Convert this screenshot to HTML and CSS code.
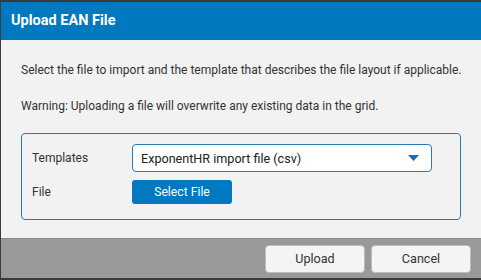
FILE: index.html
```html
<!DOCTYPE html>
<html lang="en">
<head>
  <meta charset="UTF-8">
  <title>Upload EAN File</title>
  <link rel="stylesheet" href="styles.css">
</head>
<body>
  <div class="dialog">
    <div class="dlg-head">Upload EAN File</div>
    <div class="dlg-body">
      <p>Select the file to import and the template that describes the file layout if applicable.</p>
      <p>Warning: Uploading a file will overwrite any existing data in the grid.</p>
      <div class="box">
        <div class="row">
          <span class="lbl">Templates</span>
          <div class="select">
            <span>ExponentHR import file (csv)</span>
            <svg width="11" height="6" viewBox="0 0 11 6"><path d="M0 0H11L5.5 6Z" fill="#1a6fae"/></svg>
          </div>
        </div>
        <div class="row">
          <span class="lbl">File</span>
          <span class="btn-blue">Select File</span>
        </div>
      </div>
    </div>
    <div class="dlg-foot">
      <span class="btn">Upload</span>
      <span class="btn">Cancel</span>
    </div>
  </div>
</body>
</html>
```

FILE: styles.css
```css
*{margin: 0px; padding: 0px; box-sizing: border-box;}
body{
  width: 481px; height: 280px;
  background: #3a3a3a;
  font-family: Roboto, "Liberation Sans", sans-serif;
  overflow: hidden;
}
.dialog{
  margin-top: 2px;
  margin-left: 1px;
  width: 482px; height: 276px;
  display: flex;
  flex-direction: column;
  background: #f2f2f2;
}
.dlg-head{
  height: 38px;
  background: #0079c1;
  color: #fff;
  font-size: 14.5px; font-weight: bold;
  padding: 10px 0 0 10px;
}
.dlg-body{
  height: 198px;
  padding: 21px 20px 0 20px;
  font-size: 12px;
  color: #333;
}
.dlg-body p{
  line-height: 18px;
  margin-bottom: 18px;
  white-space: nowrap;
}
/* 템플릿 박스 */
.box{
  margin-top: 6px;
  width: 440px; height: 87px;
  border: 1px solid #2a7ab8;
  border-radius: 4px;
  padding: 10px 0 0 10px;
}
.row{
  display: flex;
  align-items: center;
  margin-bottom: 8px;
}
.lbl{width: 100px; color: #333;}
.select{
  width: 300px; height: 28px;
  background: #fff;
  border: 1px solid #2a7ab8;
  border-radius: 4px;
  display: flex;
  align-items: center;
  justify-content: space-between;
  padding: 0 12px 0 8px;
  font-size: 12.6px;
  color: #222;
}
.btn-blue{
  width: 100px; height: 24px;
  background: #0079c1;
  color: #fff;
  border-radius: 3px;
  display: flex;
  align-items: center;
  justify-content: center;
  font-size: 12.2px;
}
.dlg-foot{
  height: 40px;
  background: #999;
  border-top: 1px solid #8a8a8a;
  display: flex;
  justify-content: flex-end;
  align-items: center;
  gap: 6px;
  padding: 0 12px 0 0;
}
.btn{
  width: 100px; height: 28px;
  background: #f4f4f4;
  border: 1px solid #bdbdbd;
  border-radius: 4px;
  display: flex;
  align-items: center;
  justify-content: center;
  font-size: 12.6px;
  color: #333;
}
```
